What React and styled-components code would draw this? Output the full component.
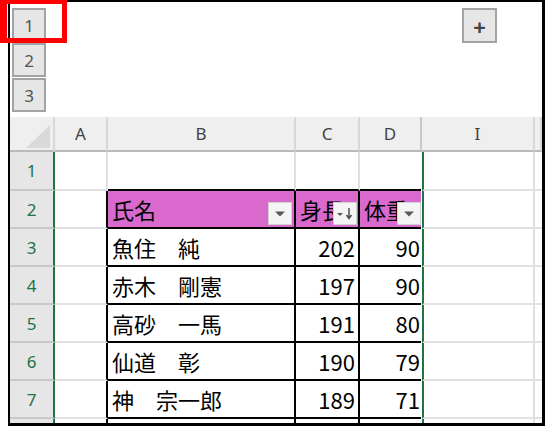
import React from 'react';
import styled, { createGlobalStyle } from 'styled-components';

const GlobalStyle = createGlobalStyle`
  html, body {
    margin: 0;
    padding: 0;
    background: #fff;
  }
  body {
    font-family: "Noto Sans CJK JP", "Noto Sans", sans-serif;
  }
`;

const COLS = '45px 53px 188px 64px 61px 1px 113px 7px';
const GRID = '#e1e1e1';
const INK = '#000';
const SELECT = '#217346';
const HEAD_FILL = '#d969cc';

const Page = styled.div`
  position: relative;
  width: 545px;
  height: 426px;
  padding-left: 8px;
  box-sizing: border-box;
  overflow: hidden;
`;

const Sheet = styled.div`
  height: 426px;
  box-sizing: border-box;
  border-top: 2px solid #000;
  border-left: 2px solid #000;
  border-right: 3px solid #000;
  border-bottom: 3px solid #000;
  overflow: hidden;
`;

const Row = styled.div`
  display: grid;
  grid-template-columns: ${COLS};
  height: ${(p) => p.$h}px;
`;

const LevelStack = styled.div`
  display: flex;
  flex-direction: column;
  gap: 1px;
  padding: 6px 0 0 2px;
`;

const LevelButton = styled.div`
  width: 34px;
  height: 34px;
  box-sizing: border-box;
  border: 2px solid #a3a3a3;
  background: #e6e6e6;
  display: flex;
  align-items: center;
  justify-content: center;
  font: 17px "Noto Sans", sans-serif;
  color: #555;
`;

const GroupSlot = styled.div`
  grid-column: 7;
  padding: 6px 0 0 40px;
`;

const ExpandButton = styled(LevelButton)`
  width: 35px;
  height: 35px;
  font-size: 22px;
  font-weight: 700;
  color: #444;
`;

const Corner = styled.div`
  box-sizing: border-box;
  background: #efefef;
  border-right: 2px solid #d8d8d8;
  border-bottom: 2px solid #b9b9b9;
  display: flex;
  align-items: flex-end;
  justify-content: flex-end;
  padding: 0 3px 2px 0;
`;

const ColHead = styled.div`
  box-sizing: border-box;
  background: #efefef;
  border-right: ${(p) => (p.$double ? '1px solid #c8c8c8' : '2px solid #d8d8d8')};
  border-bottom: 2px solid #b9b9b9;
  display: flex;
  align-items: center;
  justify-content: center;
  font: 17px "Noto Sans", sans-serif;
  color: #444;
`;

const RowHead = styled.div`
  box-sizing: border-box;
  background: #e6e6e6;
  border-right: 2px solid ${SELECT};
  border-bottom: 2px solid #c9c9c9;
  display: flex;
  align-items: center;
  justify-content: center;
  font: 17px "Noto Sans", sans-serif;
  color: ${SELECT};
`;

const Cell = styled.div`
  position: relative;
  box-sizing: border-box;
  min-width: 0;
  display: flex;
  align-items: center;
  justify-content: ${(p) => (p.$right ? 'flex-end' : 'flex-start')};
  padding: ${(p) => (p.$right ? `0 ${p.$pr ?? 3}px 0 0` : '0 0 0 4px')};
  border-left: ${(p) => (p.$select ? `2px solid ${SELECT}` : '0')};
  border-right: ${(p) => (p.$rb === 'none' ? '0' : `2px solid ${p.$rb || GRID}`)};
  border-bottom: 2px solid ${(p) => p.$bb || GRID};
  background: ${(p) => p.$fill || '#fff'};
  font-size: 22px;
  line-height: 1;
  color: #000;
  white-space: nowrap;
  overflow: hidden;
`;

const FilterButton = styled.div`
  position: absolute;
  right: ${(p) => p.$r}px;
  bottom: 2px;
  width: 24px;
  height: 23px;
  box-sizing: border-box;
  background: #f4f4f4;
  border: 1px solid #d2d2d2;
  display: flex;
  align-items: center;
  justify-content: center;
`;

const RedMark = styled.div`
  position: absolute;
  left: 0;
  top: 0;
  width: 67px;
  height: 43px;
  box-sizing: border-box;
  border-style: solid;
  border-color: #ff0000;
  border-width: 4px 5px 5px 7px;
`;

const DropArrow = () => (
  <svg width="10" height="6" viewBox="0 0 10 6">
    <path d="M0 0.5 H10 L5 5.5 Z" fill="#5a5a5a" />
  </svg>
);

const SortArrow = () => (
  <svg width="22" height="21" viewBox="0 0 22 21">
    <path d="M3 10 H9 L6 13 Z" fill="#5a5a5a" />
    <path d="M15 5 V14.5" stroke="#444" strokeWidth="1.4" />
    <path d="M12.5 12 L15 15.5 L17.5 12" stroke="#444" strokeWidth="1.4" fill="none" />
  </svg>
);

const CornerMark = () => (
  <svg width="24" height="23" viewBox="0 0 24 23">
    <path d="M24 0 V23 H0 Z" fill="#d9d9d9" />
  </svg>
);

const people = [
  { name: '魚住\u3000純', height: 202, weight: 90 },
  { name: '赤木\u3000剛憲', height: 197, weight: 90 },
  { name: '高砂\u3000一馬', height: 191, weight: 80 },
  { name: '仙道\u3000彰', height: 190, weight: 79 },
  { name: '神\u3000宗一郎', height: 189, weight: 71 },
];

const TailCells = () => (
  <>
    <Cell $rb="none" $bb="#fff" />
    <Cell $select />
    <Cell $rb="none" />
  </>
);

export default function App() {
  return (
    <>
      <GlobalStyle />
      <Page>
        <Sheet>
          <Row $h={115}>
            <LevelStack>
              <LevelButton>1</LevelButton>
              <LevelButton>2</LevelButton>
              <LevelButton>3</LevelButton>
            </LevelStack>
            <GroupSlot>
              <ExpandButton>+</ExpandButton>
            </GroupSlot>
          </Row>

          <Row $h={35}>
            <Corner>
              <CornerMark />
            </Corner>
            <ColHead>A</ColHead>
            <ColHead>B</ColHead>
            <ColHead>C</ColHead>
            <ColHead $double>D</ColHead>
            <ColHead $double />
            <ColHead>I</ColHead>
            <ColHead />
          </Row>

          <Row $h={39}>
            <RowHead>1</RowHead>
            <Cell />
            <Cell $bb={INK} />
            <Cell $bb={INK} />
            <Cell $bb={INK} $rb="none" />
            <TailCells />
          </Row>

          <Row $h={38}>
            <RowHead>2</RowHead>
            <Cell $rb={INK} />
            <Cell $rb={INK} $bb={INK} $fill={HEAD_FILL}>
              氏名
              <FilterButton $r={2}>
                <DropArrow />
              </FilterButton>
            </Cell>
            <Cell $rb={INK} $bb={INK} $fill={HEAD_FILL}>
              身長
              <FilterButton $r={1}>
                <SortArrow />
              </FilterButton>
            </Cell>
            <Cell $rb="none" $bb={INK} $fill={HEAD_FILL}>
              体重
              <FilterButton $r={0}>
                <DropArrow />
              </FilterButton>
            </Cell>
            <TailCells />
          </Row>

          {people.map((p, i) => (
            <Row $h={38} key={p.name}>
              <RowHead>{i + 3}</RowHead>
              <Cell $rb={INK} />
              <Cell $rb={INK} $bb={INK}>
                {p.name}
              </Cell>
              <Cell $rb={INK} $bb={INK} $right $pr={3}>
                {p.height}
              </Cell>
              <Cell $rb="none" $bb={INK} $right $pr={1}>
                {p.weight}
              </Cell>
              <TailCells />
            </Row>
          ))}

          <Row $h={38}>
            <RowHead />
            <Cell $rb={INK} />
            <Cell $rb={INK} $bb={INK} />
            <Cell $rb={INK} $bb={INK} />
            <Cell $rb="none" $bb={INK} />
            <TailCells />
          </Row>
        </Sheet>
        <RedMark />
      </Page>
    </>
  );
}
